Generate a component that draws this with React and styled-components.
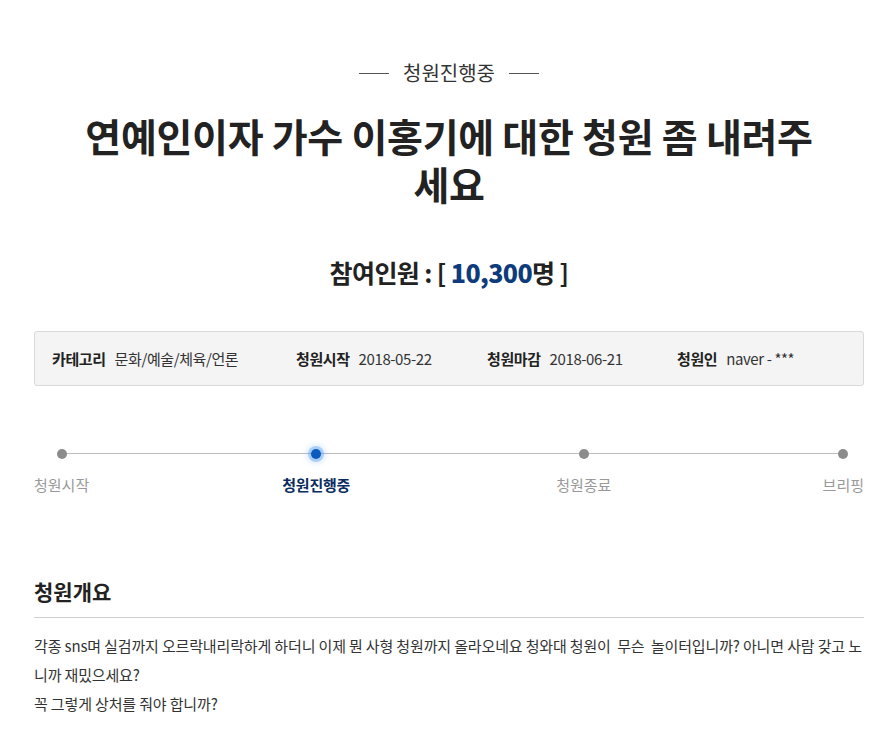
import React from "react";
import styled, { createGlobalStyle } from "styled-components";

const GlobalStyle = createGlobalStyle`
  html, body {
    margin: 0;
    padding: 0;
    background: #fff;
  }
  body {
    font-family: "Noto Sans CJK KR", "Noto Sans", sans-serif;
    color: #333;
  }
`;

const Page = styled.div`
  width: 830px;
  padding: 59px 31px 0 34px;
`;

const Status = styled.div`
  display: flex;
  align-items: center;
  justify-content: center;
  gap: 14px;
  font-size: 20px;
  line-height: 28px;
  color: #333;

  &::before,
  &::after {
    content: "";
    width: 30px;
    height: 1px;
    background: #555;
  }
`;

const Title = styled.h1`
  max-width: 760px;
  margin: 24px auto 0;
  font-size: 39px;
  line-height: 48px;
  font-weight: 700;
  color: #222;
  text-align: center;
  letter-spacing: -0.3px;
`;

const Count = styled.p`
  margin: 48px 0 0;
  text-align: center;
  font-size: 25px;
  line-height: 34px;
  font-weight: 700;
  color: #222;
  letter-spacing: -0.6px;

  strong {
    color: #0d3b7c;
  }
`;

const InfoBox = styled.dl`
  margin: 42px 0 0;
  height: 55px;
  box-sizing: border-box;
  border: 1px solid #d9d9d9;
  border-radius: 3px;
  background: #f4f4f4;
  padding-left: 17px;
  display: grid;
  grid-template-columns: 244px 191px 190px 1fr;
  align-items: center;
  font-size: 15px;
  letter-spacing: -0.4px;
`;

const InfoItem = styled.div`
  display: flex;
  align-items: center;
  gap: 9px;
`;

const InfoLabel = styled.dt`
  font-weight: 700;
  color: #222;
`;

const InfoValue = styled.dd`
  margin: 0;
  color: #333;
`;

const Timeline = styled.ol`
  list-style: none;
  margin: 63px 0 0;
  padding: 0;
  display: flex;
  position: relative;

  &::before {
    content: "";
    position: absolute;
    top: 4px;
    left: 27px;
    right: 21px;
    height: 1px;
    background: #bdbdbd;
  }
`;

const Step = styled.li`
  position: relative;
  display: flex;
  flex-direction: column;
  align-items: center;
  gap: 16px;
  margin-left: ${(p) => p.$ml};
`;

const Dot = styled.span`
  width: 10px;
  height: 10px;
  border-radius: 50%;
  background: ${(p) => (p.$active ? "#0a5bbd" : "#8c8c8c")};
  box-shadow: ${(p) =>
    p.$active
      ? "0 0 0 3px rgba(70, 150, 240, 0.35), 0 0 6px 4px rgba(70,150,240,0.25)"
      : "none"};
`;

const StepLabel = styled.span`
  font-size: 15px;
  line-height: 20px;
  white-space: nowrap;
  color: ${(p) => (p.$active ? "#0b2c5e" : "#999")};
  font-weight: ${(p) => (p.$active ? 700 : 400)};
  letter-spacing: ${(p) => (p.$active ? "-0.2px" : "0")};
`;

const SectionTitle = styled.h2`
  margin: 82px 0 0;
  padding-bottom: 12px;
  border-bottom: 1px solid #cfcfcf;
  font-size: 21px;
  line-height: 28px;
  font-weight: 700;
  color: #222;
`;

const Body = styled.div`
  margin-top: 13px;
  font-size: 15px;
  line-height: 29px;
  color: #333;
  letter-spacing: -0.15px;
  white-space: pre-wrap;
`;

const steps = [
  { label: "청원시작", ml: "0" },
  { label: "청원진행중", ml: "193px", active: true },
  { label: "청원종료", ml: "206px" },
  { label: "브리핑", ml: "auto" },
];

const info = [
  ["카테고리", "문화/예술/체육/언론"],
  ["청원시작", "2018-05-22"],
  ["청원마감", "2018-06-21"],
  ["청원인", "naver - ***"],
];

export default function App() {
  return (
    <>
      <GlobalStyle />
      <Page>
        <Status>청원진행중</Status>
        <Title>연예인이자 가수 이홍기에 대한 청원 좀 내려주세요</Title>
        <Count>
          참여인원 : [ <strong>10,300</strong>명 ]
        </Count>
        <InfoBox>
          {info.map(([k, v]) => (
            <InfoItem key={k}>
              <InfoLabel>{k}</InfoLabel>
              <InfoValue>{v}</InfoValue>
            </InfoItem>
          ))}
        </InfoBox>
        <Timeline>
          {steps.map((s) => (
            <Step key={s.label} $ml={s.ml}>
              <Dot $active={s.active} />
              <StepLabel $active={s.active}>{s.label}</StepLabel>
            </Step>
          ))}
        </Timeline>
        <SectionTitle>청원개요</SectionTitle>
        <Body>
          {"각종 sns며 실검까지 오르락내리락하게 하더니 이제 뭔 사형 청원까지 올라오네요 청와대 청원이  무슨  놀이터입니까? 아니면 사람 갖고 노니까 재밌으세요?\n꼭 그렇게 상처를 줘야 합니까?"}
        </Body>
      </Page>
    </>
  );
}
